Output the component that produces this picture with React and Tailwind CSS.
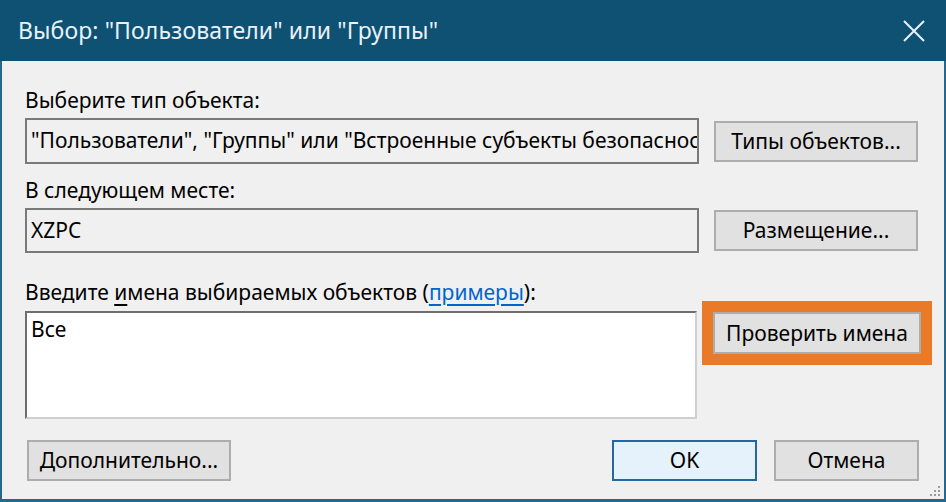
import React from "react";

const font = { fontFamily: '"Noto Sans", "Open Sans", Arial, sans-serif' };

function WinButton({ children, className = "" }) {
  return (
    <button
      className={`h-[41px] bg-[#e1e1e1] border-2 border-[#adadad] text-[21px] text-black leading-none ${className}`}
    >
      {children}
    </button>
  );
}

export default function App() {
  return (
    <div className="w-[946px] h-[502px] flex flex-col overflow-hidden text-black" style={font}>
      <header className="h-[61px] shrink-0 bg-[#0f5173] flex items-center justify-between pl-[18px] pr-[21px]">
        <span className="text-[23px] text-[#e8f3f8] tracking-[0.1px]">Выбор: "Пользователи" или "Группы"</span>
        <svg width="22" height="22" viewBox="0 0 22 22" className="text-[#e8f3f8]">
          <path d="M1 1 L21 21 M21 1 L1 21" stroke="currentColor" strokeWidth="2" />
        </svg>
      </header>

      <div className="flex-1 relative bg-[#f0f0f0] border-l-2 border-r-2 border-b-[3px] border-[#24688e] pl-[23px] flex flex-col">
        <div className="mt-[25px] h-[28px] text-[21px] leading-[28px]">Выберите тип объекта:</div>
        <div className="mt-[4px] flex items-center">
          <div className="w-[674px] h-[46px] border-2 border-[#7a7a7a] bg-[#f0f0f0] pl-[4px] text-[21px] flex items-center whitespace-nowrap overflow-hidden">
            "Пользователи", "Группы" или "Встроенные субъекты безопасности"
          </div>
          <WinButton className="ml-[15px] w-[204px]">Типы объектов...</WinButton>
        </div>

        <div className="mt-[12px] h-[28px] text-[21px] leading-[28px]">В следующем месте:</div>
        <div className="mt-[4px] flex items-center">
          <div className="w-[674px] h-[45px] border-2 border-[#7a7a7a] bg-[#f0f0f0] pl-[4px] text-[21px] flex items-center">
            XZPC
          </div>
          <WinButton className="ml-[15px] w-[204px]">Размещение...</WinButton>
        </div>

        <div className="mt-[25px] h-[28px] text-[21px] leading-[28px]">
          Введите <span className="underline underline-offset-4">и</span>мена выбираемых объектов (
          <span className="text-[#0066cc] underline underline-offset-4">примеры</span>):
        </div>
        <div className="mt-[5px] flex items-start">
          <div className="w-[672px] h-[108px] border-2 border-[#6e6e6e] border-r-[#cfcfcf] border-b-[#cfcfcf] bg-white pl-[4px] pt-[2px] text-[21px] leading-[28px]">
            Все
          </div>
          <WinButton className="ml-[16px] w-[208px] h-[42px] mt-[1px] outline-[11px] outline-solid outline-[#e97a28]">
            Проверить имена
          </WinButton>
        </div>

        <div className="mt-[21px] flex items-center pr-[25px]">
          <WinButton className="w-[204px] ml-[2px]">Дополнительно...</WinButton>
          <div className="flex-1" />
          <button className="w-[145px] h-[41px] bg-[#e5f1fb] border-2 border-[#2467a4] text-[21px] leading-none">OK</button>
          <WinButton className="ml-[17px] w-[145px]">Отмена</WinButton>
        </div>

        <svg width="12" height="12" viewBox="0 0 12 12" className="absolute right-[3px] bottom-[2px]">
          <g fill="#9a9a9a">
            <rect x="9" y="1" width="2" height="2" />
            <rect x="5" y="5" width="2" height="2" />
            <rect x="9" y="5" width="2" height="2" />
            <rect x="1" y="9" width="2" height="2" />
            <rect x="5" y="9" width="2" height="2" />
            <rect x="9" y="9" width="2" height="2" />
          </g>
        </svg>
      </div>
    </div>
  );
}
